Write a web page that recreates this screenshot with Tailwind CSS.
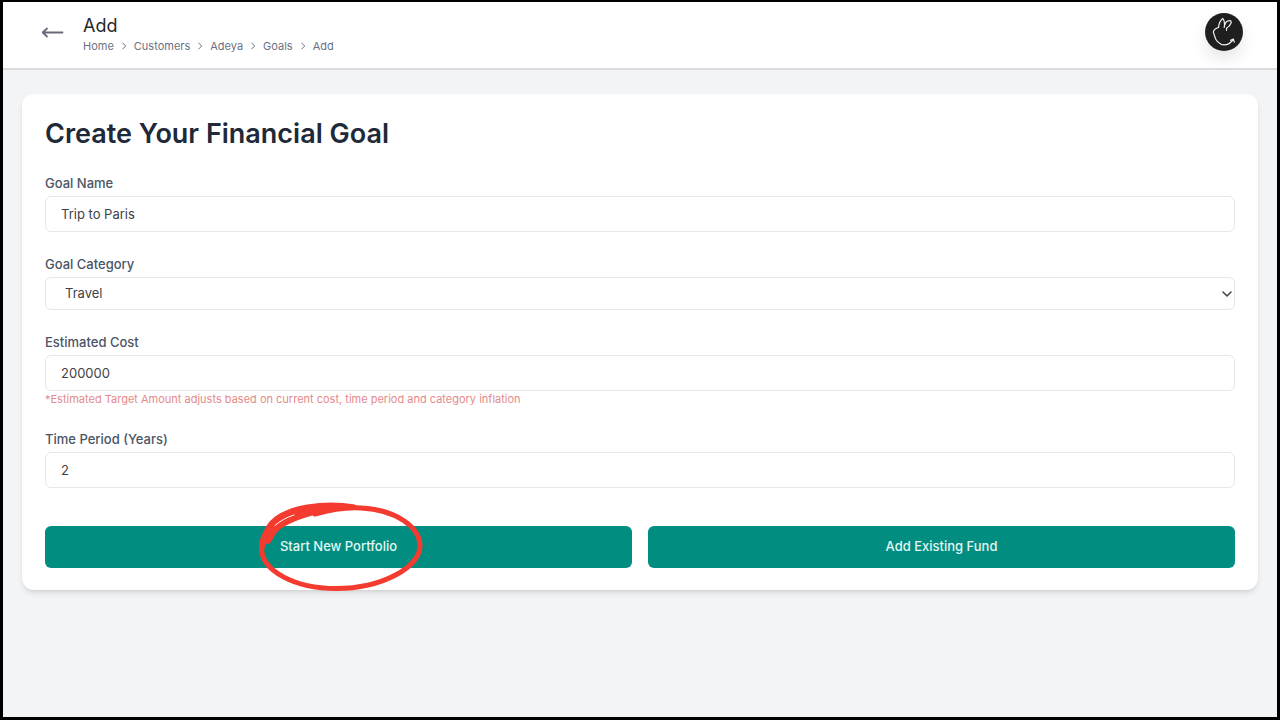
<!DOCTYPE html>
<html lang="en">
  <head>
    <meta charset="UTF-8" />
    <meta name="viewport" content="width=device-width, initial-scale=1.0" />
    <title>Add Goal</title>
    <script src="https://cdn.jsdelivr.net/npm/@tailwindcss/browser@4"></script>
  </head>
  <body class="min-h-screen flex flex-col border-[3px] border-t-2 border-black bg-gray-100 font-['Inter',sans-serif] text-gray-800">
    <header class="flex items-center justify-between bg-white border-b-2 border-[#dadcdf] pl-[38px] pr-[34px] pt-2 pb-3.5">
      <div class="flex items-center gap-[18px]">
        <a href="#" aria-label="Back" class="text-[#6b6878]">
          <svg class="w-6 h-6" viewBox="0 0 24 24" fill="none" stroke="currentColor" stroke-width="1.8" stroke-linecap="round" stroke-linejoin="round">
            <path d="M21.500 12.500H2M6 8.500l-4.300 4 4.300 4" />
          </svg>
        </a>
        <div class="pt-1">
          <h1 class="text-[18px] leading-6 text-[#27272a]">Add</h1>
          <nav aria-label="Breadcrumb">
            <ol class="flex items-center gap-1.5 text-[11px] leading-4 text-gray-500">
              <li><a href="#">Home</a></li>
              <li aria-hidden="true"><svg class="w-2 h-2" viewBox="0 0 8 8" fill="none" stroke="currentColor"><path d="M2.5.8 5.7 4 2.5 7.2" /></svg></li>
              <li><a href="#">Customers</a></li>
              <li aria-hidden="true"><svg class="w-2 h-2" viewBox="0 0 8 8" fill="none" stroke="currentColor"><path d="M2.5.8 5.7 4 2.5 7.2" /></svg></li>
              <li><a href="#">Adeya</a></li>
              <li aria-hidden="true"><svg class="w-2 h-2" viewBox="0 0 8 8" fill="none" stroke="currentColor"><path d="M2.5.8 5.7 4 2.5 7.2" /></svg></li>
              <li><a href="#">Goals</a></li>
              <li aria-hidden="true"><svg class="w-2 h-2" viewBox="0 0 8 8" fill="none" stroke="currentColor"><path d="M2.5.8 5.7 4 2.5 7.2" /></svg></li>
              <li>Add</li>
            </ol>
          </nav>
        </div>
      </div>
      <button type="button" aria-label="Account" class="rounded-full shadow-[0_8px_16px_rgba(0,0,0,0.1)]">
        <svg class="w-[38px] h-[38px]" viewBox="0 0 38 38" fill="none" stroke="#f4f4f5" stroke-width="1.2" stroke-linecap="round" stroke-linejoin="round">
          <circle cx="19" cy="19" r="19" fill="#1f1f20" stroke="none" />
          <path d="M13.500 14.500C13.800 11 15.300 7.500 17.800 5.500c2 2.500 2 5.500 1.400 9" />
          <path d="M19.700 12c.8-2.500 2.500-4.100 4.800-4.300 1.600-.1 2 .9 1.500 2.300-.8 2.500-2.300 4-4.500 5.300v2" />
          <path d="M13.500 14.500c-2.500.8-4.600 2.200-5 4-.3 1.600.6 2.500 1 4.200.6 2.800 1.500 4.500 3 6 2 2 4 3.200 6.500 3.200 4 0 7-2.200 9.300-5.600M25.500 27.300l2.900-1.200.8 3.100" />
        </svg>
      </button>
    </header>

    <main class="px-[19px] pt-6 pb-8">
      <form class="bg-white rounded-xl shadow-md px-[23px] py-[22px]">
        <h2 class="mb-[21px] text-[27px] leading-9 font-semibold text-gray-800">Create Your Financial Goal</h2>

        <div class="flex flex-col gap-[22px]">
          <div>
            <label for="goal-name" class="block mb-[3px] text-[13px] leading-5 font-medium text-gray-600">Goal Name</label>
            <input id="goal-name" type="text" value="Trip to Paris" class="block w-full h-9 px-[15px] border border-gray-200 rounded-md bg-white text-[13px] text-[#3f3f46] outline-none" />
          </div>

          <div>
            <label for="goal-category" class="block mb-[3px] text-[13px] leading-5 font-medium text-gray-600">Goal Category</label>
            <div class="relative">
              <select id="goal-category" class="block w-full h-[33px] px-[19px] appearance-none border border-gray-200 rounded-md bg-white text-[13px] text-[#3f3f46] outline-none">
                <option selected>Travel</option>
                <option>Education</option>
                <option>Home</option>
              </select>
              <svg class="absolute right-[3px] top-1/2 -translate-y-1/2 w-2.5 h-2.5 pointer-events-none" viewBox="0 0 10 10" fill="none" stroke="#3f3f46" stroke-width="1.5" stroke-linecap="round" stroke-linejoin="round">
                <path d="M1 3l4 4 4-4" />
              </svg>
            </div>
          </div>

          <div>
            <label for="estimated-cost" class="block mb-[3px] text-[13px] leading-5 font-medium text-gray-600">Estimated Cost</label>
            <input id="estimated-cost" type="text" inputmode="numeric" value="200000" class="block w-full h-9 px-[15px] border border-gray-200 rounded-md bg-white text-[13px] text-[#3f3f46] outline-none" />
            <p class="text-[11px] leading-4 text-[#e58a8a]">*Estimated Target Amount adjusts based on current cost, time period and category inflation</p>
          </div>

          <div>
            <label for="time-period" class="block mb-[3px] text-[13px] leading-5 font-medium text-gray-600">Time Period (Years)</label>
            <input id="time-period" type="text" inputmode="numeric" value="2" class="block w-full h-9 px-[15px] border border-gray-200 rounded-md bg-white text-[13px] text-[#3f3f46] outline-none" />
          </div>

          <div class="mt-4 grid grid-cols-2 gap-4">
            <button type="button" class="relative h-[42px] rounded-md bg-[#018d7f] text-[13px] font-medium text-[#e2f6f3]">
              Start New Portfolio
              <!-- hand-drawn marker ring -->
              <svg class="absolute left-1/2 top-1/2 -translate-x-1/2 -translate-y-1/2 w-[168px] h-[92px] pointer-events-none" viewBox="0 0 168 92" fill="none" stroke-linecap="round" stroke-linejoin="round">
                <path stroke="#f43b30" stroke-width="5" d="M60 13C78 8 92 6 106 7c36 2 58 19 59 37 1 22-38 43.500-84 43.500C40 87.500 6.500 70 6.500 47c0-7 3-14 8-20" />
                <path fill="#f43b30" d="M4 45C5 37 9 27 15 20 24 11 37 6 52 3.500 69 .7 84 .8 100 3.500l4 5C86 8 69 11 54 15.500 39 20 27 25 21 32.500l-5 8.500c-2 3-4 2-5 1.500L9 49z" />
                <path stroke="#fff" d="M20 24.500c5-4.500 11-8 19-10.500" />
              </svg>
            </button>
            <button type="button" class="h-[42px] rounded-md bg-[#018d7f] text-[13px] font-medium text-[#e2f6f3]">Add Existing Fund</button>
          </div>
        </div>
      </form>
    </main>
  </body>
</html>
